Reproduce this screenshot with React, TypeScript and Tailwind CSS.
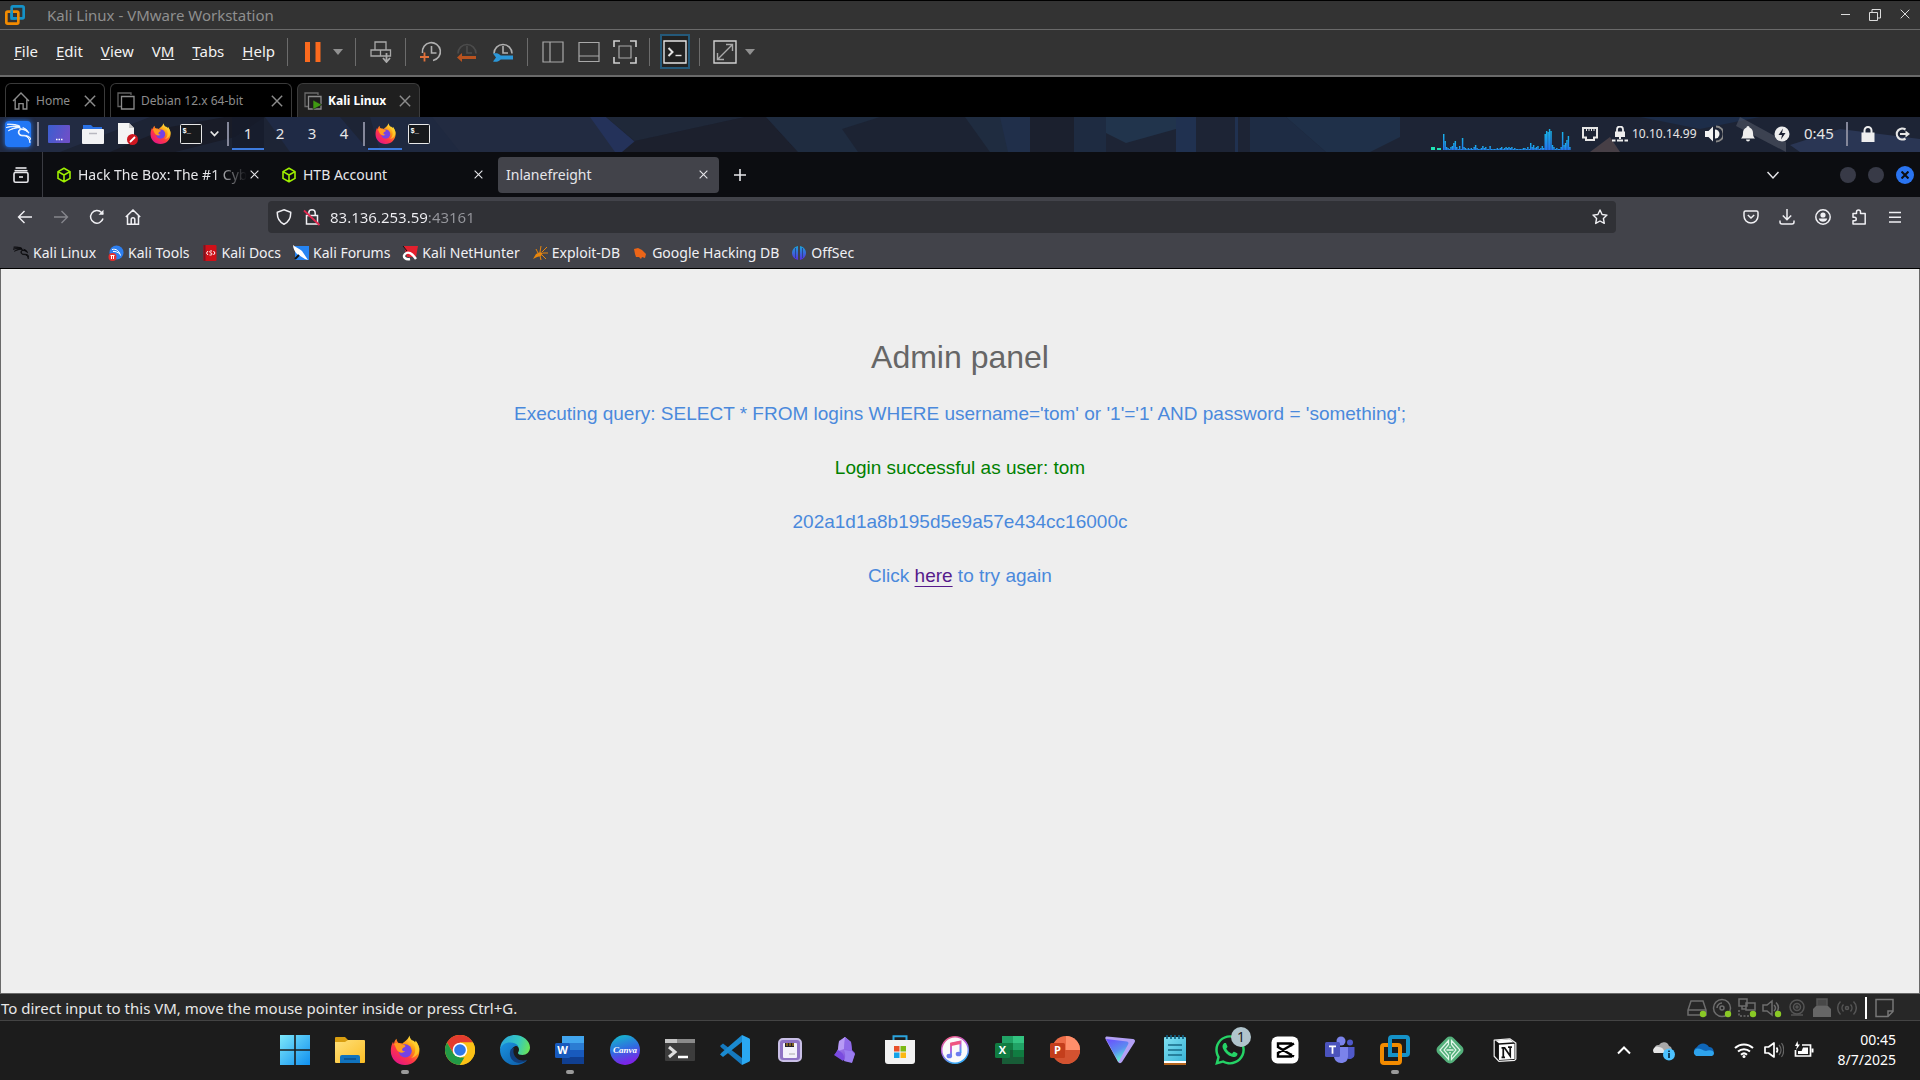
import React from 'react'
import { SiKalilinux } from 'react-icons/si'
import { FaWhatsapp } from 'react-icons/fa'

type IconProps = {
  size?: number
  box?: string
  className?: string
  children: React.ReactNode
}

// Line icon: strokes follow the text colour
const Line: React.FC<IconProps & { sw?: number }> = ({ size = 20, box, sw = 1.5, className = '', children }) => (
  <svg
    width={size}
    height={size}
    viewBox={box ?? `0 0 ${size} ${size}`}
    fill="none"
    stroke="currentColor"
    strokeWidth={sw}
    className={`shrink-0 ${className}`}
    aria-hidden="true"
  >
    {children}
  </svg>
)

const Art: React.FC<IconProps> = ({ size = 30, box, className = '', children }) => (
  <svg
    width={size}
    height={size}
    viewBox={box ?? `0 0 ${size} ${size}`}
    className={`shrink-0 ${className}`}
    aria-hidden="true"
  >
    {children}
  </svg>
)

const Defs = () => (
  <svg width="0" height="0" className="absolute" aria-hidden="true">
    <defs>
      <linearGradient id="win" x1="0" y1="0" x2="1" y2="1">
        <stop offset="0" stopColor="#7de8fb" />
        <stop offset="1" stopColor="#0f8fef" />
      </linearGradient>
      <linearGradient id="folder" x1="0" y1="0" x2="1" y2="1">
        <stop offset="0" stopColor="#ffe07a" />
        <stop offset="1" stopColor="#fbbd24" />
      </linearGradient>
      <linearGradient id="fox" x1="0.85" y1="0.05" x2="0.2" y2="0.95">
        <stop offset="0" stopColor="#fff44f" />
        <stop offset="0.35" stopColor="#ff980e" />
        <stop offset="0.65" stopColor="#ff3647" />
        <stop offset="1" stopColor="#e31587" />
      </linearGradient>
      <linearGradient id="edgeTop" x1="0" y1="0.3" x2="1" y2="0.5">
        <stop offset="0" stopColor="#2aa5dc" />
        <stop offset="0.6" stopColor="#35c8c0" />
        <stop offset="1" stopColor="#68e35a" />
      </linearGradient>
      <linearGradient id="edgeLow" x1="0" y1="0" x2="1" y2="1">
        <stop offset="0" stopColor="#1a93e0" />
        <stop offset="1" stopColor="#0c59a4" />
      </linearGradient>
      <linearGradient id="canva" x1="0" y1="0" x2="0.3" y2="1">
        <stop offset="0" stopColor="#12c3c9" />
        <stop offset="0.55" stopColor="#2f6de0" />
        <stop offset="1" stopColor="#7b25e8" />
      </linearGradient>
      <linearGradient id="tunes" x1="0" y1="0" x2="0.4" y2="1">
        <stop offset="0" stopColor="#fb5c74" />
        <stop offset="0.5" stopColor="#b660e0" />
        <stop offset="1" stopColor="#38a8f5" />
      </linearGradient>
      <linearGradient id="desk" x1="0" y1="0" x2="1" y2="0.3">
        <stop offset="0" stopColor="#3a5fd0" />
        <stop offset="1" stopColor="#6c50c8" />
      </linearGradient>
      <linearGradient id="vpn" x1="0" y1="0" x2="0.5" y2="1">
        <stop offset="0" stopColor="#6d4aff" />
        <stop offset="0.6" stopColor="#5b8df0" />
        <stop offset="1" stopColor="#5ff5d0" />
      </linearGradient>
      <linearGradient id="gem" x1="0" y1="0" x2="1" y2="1">
        <stop offset="0" stopColor="#b79bf5" />
        <stop offset="1" stopColor="#6a35d0" />
      </linearGradient>
      <linearGradient id="cpu" x1="0" y1="0" x2="0" y2="1">
        <stop offset="0" stopColor="#18b4ea" />
        <stop offset="1" stopColor="#2474f0" />
      </linearGradient>
      <linearGradient id="offsec" x1="0" y1="0" x2="0" y2="1">
        <stop offset="0" stopColor="#1aa5d8" />
        <stop offset="1" stopColor="#5a2ee0" />
      </linearGradient>
      <linearGradient id="note" x1="0" y1="0" x2="1" y2="1">
        <stop offset="0" stopColor="#7fe0f2" />
        <stop offset="1" stopColor="#39b3d6" />
      </linearGradient>
    </defs>
  </svg>
)

/* ---------- shared drawings ---------- */

const VmwareLogo = ({ size = 30 }: { size?: number }) => (
  <Art size={size} box="0 0 30 30">
    <rect x="10" y="2" width="18" height="18" rx="2" fill="none" stroke="#1592c8" strokeWidth="4" />
    <rect x="2" y="10" width="18" height="18" rx="2" fill="none" stroke="#f38b00" strokeWidth="4" />
    <path d="M10 8v12h6" fill="none" stroke="#1592c8" strokeWidth="4" />
  </Art>
)

const Firefox = ({ size = 30 }: { size?: number }) => (
  <Art size={size} box="0 0 30 30">
    <path
      d="M19.5 0.5c.2 2 1 3.600 2.500 5 1.200-.200 2.300.600 3 2 .800-.300.600-1.200.400-2 2.400 3 4 6.500 4 10.500C29.400 23.800 23 30 15 30S.800 24 .800 16c0-3.800 1-6.800 2.200-9.200.300 1 .500 1.700 1 2.200.200-2 1-4 2.600-5.200 0 1.800.600 3 2 4.200 1.200-.200 2.600 0 3.900.400C14 7 17.500 5.500 19.500.5z"
      fill="url(#fox)"
    />
    <circle cx="15.200" cy="15.800" r="6.600" fill="#7542e5" />
    <path d="M4 9c2-2 5.500-1 7.500.500 1.600 0 3.500.500 4 1.500-.500 1.500-3 1.500-3.500 3.500.300 1.500 1.500 2 3 1.800-2 2.600-7 1.500-8.500-2C5.500 12.500 5 10 4 9z" fill="#ff9a1f" />
    <path d="M19.500 .5c0 5 4.500 7 5.500 11.500 1 5-1 9-4 11 5-1 8.400-5 8.400-9.500C29 10 27 7.500 25.400 5.500c.200.800.400 1.700-.400 2-.7-1.400-1.800-2.200-3-2C20.500 4 19.700 2.500 19.500.5z" fill="#ffd02e" opacity="0.75" />
  </Art>
)

const Terminal = () => (
  <Art size={22} box="0 0 22 20" className="w-[22px]">
    <rect x="0.5" y="0.5" width="21" height="19" rx="1" fill="#17191c" stroke="#e8e8e8" />
    <text x="2.500" y="9" fontSize="7" fontWeight="bold" fill="#fff" fontFamily="Liberation Mono, monospace">
      $_
    </text>
  </Art>
)

const Cross = ({ size = 10, sw = 1.2 }: { size?: number; sw?: number }) => (
  <Line size={size} box="0 0 10 10" sw={sw}>
    <path d="M.7.7l8.600 8.600M9.300.7L.7 9.300" />
  </Line>
)

const Cube = () => (
  <Art size={16}>
    <path d="M8 1.200l6 3.400v6.800l-6 3.400-6-3.400V4.600zM2 4.600l6 3.400 6-3.400M8 8v6.800" fill="none" stroke="#9fef00" strokeWidth="1.600" strokeLinejoin="round" />
  </Art>
)

/* ---------- VMware window ---------- */

const TitleBar = () => (
  <header className="flex h-[30px] items-center border-t border-b border-t-black border-b-[#6a6a6a] bg-[#333333] pl-[5px]">
    <VmwareLogo size={20} />
    <h1 className="ml-[22px] flex-1 text-[15px] leading-6 text-[#8f8f8f]">Kali Linux - VMware Workstation</h1>
    <div className="flex text-[#dcdcdc]">
      <button aria-label="Minimize" className="flex w-[30px] justify-center">
        <Line size={11} sw={1}><path d="M1 5.5h9" /></Line>
      </button>
      <button aria-label="Restore" className="flex w-[30px] justify-center">
        <Line size={12} sw={1}><path d="M.5 3.500h8v8h-8zM3 3.500V.5h8.500V9H9" /></Line>
      </button>
      <button aria-label="Close" className="flex w-[30px] justify-center">
        <Cross size={10} sw={1} />
      </button>
    </div>
  </header>
)

const MENUS = [
  { pre: '', key: 'F', post: 'ile' },
  { pre: '', key: 'E', post: 'dit' },
  { pre: '', key: 'V', post: 'iew' },
  { pre: 'V', key: 'M', post: '' },
  { pre: '', key: 'T', post: 'abs' },
  { pre: '', key: 'H', post: 'elp' },
]

const Sep = () => (
  <div className="flex w-3.5 justify-center">
    <div className="h-7 w-px bg-[#6c6c6c]" />
  </div>
)

const Tool: React.FC<{ label: string; children: React.ReactNode }> = ({ label, children }) => (
  <button aria-label={label} className="flex h-9 w-9 items-center justify-center text-[#a9a9a9]">
    {children}
  </button>
)

const Caret = () => (
  <svg width="10" height="6" viewBox="0 0 10 6" className="shrink-0" aria-hidden="true">
    <path d="M0 0h10L5 6z" fill="#909090" />
  </svg>
)

const ClockFace = ({ dim = false }: { dim?: boolean }) => (
  <g stroke={dim ? '#595959' : '#b0b0b0'} strokeWidth="1.600">
    <path d="M2.500 12A9 9 0 1 1 13 19.500" />
    <path d="M11.500 5v7h5" />
  </g>
)

const HalfClock = ({ dim = false }: { dim?: boolean }) => (
  <g stroke={dim ? '#4c4c4c' : '#b0b0b0'} strokeWidth="1.600">
    <path d="M2 12.500A9 9 0 1 1 20 12.500" />
    <path d="M11 5v7h5" />
  </g>
)

const MenuBar = () => (
  <nav className="flex h-[47px] items-center border-b-2 border-[#6a6a6a] bg-[#333333] pb-0.5 pl-3.5">
    <div className="flex gap-[18px] text-[15px] text-[#f2f2f2]">
      {MENUS.map((m) => (
        <button key={m.key}>
          {m.pre}
          <span className="underline underline-offset-2">{m.key}</span>
          {m.post}
        </button>
      ))}
    </div>
    <div className="ml-1.5 flex items-center">
      <Sep />
      <Tool label="Suspend">
        <Art size={20}>
          <rect x="2" y="0" width="5" height="20" fill="#fb6a1e" />
          <rect x="12.500" y="0" width="5" height="20" fill="#fb6a1e" />
        </Art>
      </Tool>
      <button aria-label="Power options" className="mr-1 flex w-3.5 justify-center"><Caret /></button>
      <Sep />
      <Tool label="Send Ctrl+Alt+Del">
        <Line size={22} sw={1.3}>
          <path d="M5 1h11v8H5zM1 9h9.500v6H1zM10.500 9h10v6h-10z" />
          <path d="M16.500 12v8M13 17l3.500 4 3.500-4" strokeWidth="1.800" />
        </Line>
      </Tool>
      <Sep />
      <Tool label="Take snapshot">
        <Line size={22}><ClockFace /><path d="M0 16h9M4.500 11.500v9" stroke="#e0703a" strokeWidth="1.800" /></Line>
      </Tool>
      <Tool label="Revert snapshot">
        <Line size={22}><HalfClock dim /><path d="M3 16.500h17" stroke="#b8521f" strokeWidth="3" /><path d="M6 12v9l-5-4.500z" fill="#b8521f" stroke="none" /></Line>
      </Tool>
      <Tool label="Manage snapshots">
        <Line size={22}>
          <HalfClock />
          <path d="M6 16.500h15" stroke="#2b97d8" strokeWidth="4" />
          <path d="M1 12.500c5-1 8 1 8 4s-3 5-8 4l3-4z" fill="#2b97d8" stroke="none" />
        </Line>
      </Tool>
      <Sep />
      <Tool label="Show library"><Line size={22} sw={1.2}><path d="M1 1h20v20H1zM8 1v20" /></Line></Tool>
      <Tool label="Show thumbnail bar"><Line size={22} sw={1.2}><path d="M1 1.500h20v19H1zM1 15h20" /></Line></Tool>
      <Tool label="Full screen">
        <Line size={24} sw={1.6}>
          <path d="M1 7V1h6M17 1h6v6M23 17v6h-6M7 23H1v-6" stroke="#d0d0d0" />
          <path d="M6 6h12v12H6z" strokeWidth="1.200" />
        </Line>
      </Tool>
      <Sep />
      <button aria-label="Console view" className="mx-[3px] flex h-[35px] w-[30px] items-center justify-center border-2 border-[#24597a] bg-[#222] text-[#e4e4e4]">
        <Line size={24} sw={1.4}><path d="M1 1h22v22H1z" /><path d="M5.500 8l4 4-4 4" strokeWidth="2" /><path d="M12.500 15.500h6" /></Line>
      </button>
      <Sep />
      <Tool label="Stretch guest">
        <Line size={24} sw={1.4}><path d="M1 1h22v22H1z" stroke="#d0d0d0" /><path d="M5 19L19 5M13 4.500h6.500V11M4.500 13v6.500H11" /></Line>
      </Tool>
      <button aria-label="Stretch options" className="flex w-3.5 justify-center"><Caret /></button>
    </div>
  </nav>
)

const VM_TABS = [
  { name: 'Home', kind: 'home', width: 'w-[100px]', active: false },
  { name: 'Debian 12.x 64-bit', kind: 'vm', width: 'w-[182px]', active: false },
  { name: 'Kali Linux', kind: 'run', width: 'w-[123px]', active: true },
]

const TabIcon = ({ kind }: { kind: string }) => {
  if (kind === 'home') {
    return <Line size={18} box="0 0 17 17" sw={1.3}><path d="M1 8.500L8.500 1 16 8.500M3 7v9h3.500v-5h4v5H14V7" /></Line>
  }
  return (
    <Line size={18} sw={1.3}>
      <path d="M4 14.500H1V1h13v2" opacity="0.7" />
      <path d="M4.500 4.500h12.500v12.500H4.500z" />
      {kind === 'run' && <path d="M9 8v9.500l9-4.700z" fill="#3f9a12" stroke="#1f1f1f" strokeWidth="0.600" />}
    </Line>
  )
}

const VmTabs = () => (
  <div className="flex h-10 items-end gap-[5px] bg-black pl-[5px]">
    {VM_TABS.map((t) => (
      <div
        key={t.name}
        className={`flex h-[34px] items-center rounded-t-md border border-b-0 pr-2 pl-1.5 text-xs text-[#8c8c8c] ${t.width} ${
          t.active ? 'border-[#3c3c3c] bg-[#1f1f1f]' : 'border-[#3a3a3a] bg-black'
        }`}
      >
        <TabIcon kind={t.kind} />
        <button className={`ml-1.5 flex-1 whitespace-nowrap text-left ${t.active ? 'font-bold text-white' : ''}`}>{t.name}</button>
        <button aria-label={`Close ${t.name}`}><Cross size={12} /></button>
      </div>
    ))}
  </div>
)

/* ---------- Kali desktop panel ---------- */

const Wallpaper = () => (
  <svg className="absolute inset-0 h-full w-full" viewBox="0 0 1920 35" preserveAspectRatio="none" aria-hidden="true">
    <rect width="1920" height="35" fill="#1d2435" />
    <path d="M0 0h150L60 35H0z" fill="#222b42" />
    <path d="M110 35l60-25 55-10h40l-30 20-60 15z" fill="#191c28" />
    <path d="M265 0l25 35h80L340 0z" fill="#1f2a45" />
    <path d="M370 0h70l20 35h-80z" fill="#1f2940" />
    <path d="M432 0h160l32 35H460z" fill="#222b41" />
    <path d="M590 0h16l29 25-10 10h-10z" fill="#24325a" />
    <path d="M606 0h139L635 24z" fill="#1f2839" />
    <path d="M635 24L745 0h21l32 35H622z" fill="#1c202d" />
    <path d="M766 0h264v35H798z" fill="#1f2c40" />
    <path d="M842 12L880 0h85l25 35H858z" fill="#1c2333" />
    <path d="M1000 0h30v35h-22z" fill="#202f4a" />
    <path d="M1030 0h44v35h-44z" fill="#1b202e" />
    <path d="M1074 0h32v35h-32z" fill="#1e2b41" />
    <path d="M1106 0h70v12l-50 14-20-10z" fill="#21344c" />
    <path d="M1176 0h20v35h-20zM1235 0h3v35h-3z" fill="#203150" />
    <path d="M1250 0h36l40 35h-76z" fill="#1e2c44" />
    <path d="M1286 0h114v20l-30 15h-44z" fill="#1f3049" />
    <path d="M1640 0h120l-60 12z" fill="#1d2d49" />
    <path d="M1740 0l46 25v10l-50-26z" fill="#5b5f6e" opacity="0.5" />
    <path d="M1610 20l10 15h-30z" fill="#5a4b4e" opacity="0.7" />
    <path d="M1790 28l50-16 80 10v13h-120z" fill="#2a3654" />
  </svg>
)

const CPU_LOAD = [
  16, 9, 3, 2, 1, 3, 4, 7, 9, 3, 1, 4, 1, 12, 3, 2, 1, 2, 1, 2, 1, 3, 5, 2, 1, 1, 2, 4, 2, 3, 1, 1, 4, 1, 1, 1, 1, 2,
  1, 2, 3, 1, 2, 3, 2, 3, 2, 3, 1, 2, 1, 1, 1, 1, 1, 2, 2, 1, 3, 1, 7, 3, 5, 2, 3, 4, 1, 2, 4, 2, 16, 19, 18, 21, 19,
  5, 3, 1, 2, 1, 1, 3, 18, 5, 7, 10, 14, 3,
]

const CpuGraph = () => (
  <svg width="140" height="22" viewBox="0 0 140 22" className="self-end" aria-hidden="true">
    <rect x="0" y="19" width="4" height="3" fill="#1fe3b4" />
    <rect x="6" y="20" width="4" height="2" fill="#1fe3b4" />
    {CPU_LOAD.map((v, i) => (
      <rect key={i} x={12 + i * 1.45} y={22 - v} width="1.450" height={v} fill="url(#cpu)" />
    ))}
  </svg>
)

const PanelSep = () => <div className="h-6 w-0.5 bg-[#84879a]" />

const KaliPanel = () => (
  <div className="relative h-[35px] overflow-hidden bg-[#1e2638] text-[#e6e6e6]">
    <Wallpaper />
    <div className="relative flex h-full items-center pb-0.5">
      <button aria-label="Applications" className="ml-[5px] flex h-[26px] w-[26px] items-center justify-center rounded-sm bg-[#2277f5] text-white shadow-[0_0_5px_#2277f5]">
        <SiKalilinux size={25} strokeWidth={0.8} />
      </button>
      <div className="ml-1.5"><PanelSep /></div>
      <button aria-label="Show desktop" className="ml-[9px]">
        <Art size={22} box="0 0 22 18"><rect width="22" height="18" rx="1" fill="url(#desk)" /><path d="M8 14.500h1.500M10.500 14.500H12M13 14.500h1.500" stroke="#fff" strokeWidth="1.500" /></Art>
      </button>
      <button aria-label="Files" className="ml-3">
        <Art size={22}><path d="M1 2h8l2 2h9v5H1z" fill="#2b72e6" /><rect x="0" y="6" width="22" height="15" rx="1" fill="#f2f2f4" /><path d="M7 10.500h8" stroke="#b8b8c0" strokeWidth="1.500" /></Art>
      </button>
      <button aria-label="Text editor" className="ml-3">
        <Art size={22}>
          <path d="M2 0h11l5 5v16H2z" fill="#f4f4f4" /><path d="M13 0l5 5h-5z" fill="#c8c8c8" />
          <circle cx="16.500" cy="16.500" r="5.500" fill="#cf1720" /><path d="M14 19l5-5" stroke="#fff" strokeWidth="1.800" />
        </Art>
      </button>
      <button aria-label="Firefox" className="ml-3"><Firefox size={21} /></button>
      <button aria-label="Terminal" className="ml-[9px]"><Terminal /></button>
      <button aria-label="More launchers" className="ml-2"><Line size={9} sw={1.8}><path d="M.7 2.500l3.800 4 3.800-4" /></Line></button>
      <div className="ml-2"><PanelSep /></div>
      <div className="ml-[3px] flex h-full">
        {[1, 2, 3, 4].map((n) => (
          <button
            key={n}
            className={`h-full w-8 border-b-2 pt-0.5 text-[15px] ${n === 1 ? 'border-[#3d7bde] bg-[#161b2b]/70' : 'border-transparent'}`}
          >
            {n}
          </button>
        ))}
      </div>
      <div className="ml-[3px]"><PanelSep /></div>
      <button aria-label="Firefox window" className="ml-[3px] flex h-full w-[34px] items-center justify-center border-b-2 border-[#3d7bde] pt-0.5"><Firefox size={21} /></button>
      <button aria-label="Terminal window" className="ml-1.5"><Terminal /></button>

      <div className="flex-1" />
      <CpuGraph />
      <Line size={16} sw={2} className="ml-[11px]"><path d="M1 2h14v9.500h-3v2.500H4v-2.500H1z" /><path d="M4.500 2v3M7 2v3M9.500 2v3M12 2v3" strokeWidth="1" /></Line>
      <Art size={16} className="ml-3.5">
        <path d="M3 5.500h10V11H3z" fill="#eee" /><path d="M5 6V3.500a3 3 0 0 1 6 0V6" fill="none" stroke="#eee" strokeWidth="1.800" /><path d="M8 11v2M0 14.500h3.500M5 14.500h6M12.500 14.500H16" stroke="#eee" strokeWidth="2" />
      </Art>
      <span className="ml-1 w-16 whitespace-nowrap text-xs">10.10.14.99</span>
      <Art size={18} className="ml-[9px]">
        <path d="M0 6h3.500L8 1.500v15L3.500 12H0z" fill="#f2f2f2" /><path d="M10 4.500a4.500 4.500 0 0 1 0 9z" fill="#f2f2f2" /><path d="M11 1.500a7.500 7.500 0 0 1 0 15" fill="none" stroke="#888" strokeWidth="1.800" />
      </Art>
      <Art size={16} className="ml-[17px]">
        <path d="M8 0c1 0 1.500.8 1.500 1.500C12 2.500 13 4.500 13 7c0 3 .7 4 2 5.500H1C2.300 11 3 10 3 7c0-2.500 1-4.500 3.500-5.500C6.500.8 7 0 8 0zM6 13.500h4a2 2 0 0 1-4 0z" fill="#eee" />
      </Art>
      <Art size={16} className="ml-[18px]"><circle cx="8" cy="8" r="7.500" fill="#eee" /><path d="M9 2.500L4.500 9H8l-1 4.500L11.500 7H8z" fill="#1c2132" /></Art>
      <span className="ml-3.5 w-[30px] text-[15px]">0:45</span>
      <div className="ml-3"><PanelSep /></div>
      <Art size={16} className="ml-3"><path d="M1.500 6.500h13V16h-13z" fill="#eee" /><path d="M4.500 7V4.500a3.500 3.500 0 0 1 7 0V7" fill="none" stroke="#eee" strokeWidth="2" /></Art>
      <Line size={16} sw={2.2} className="mr-2.5 ml-[18px]"><path d="M11.500 3.500a5.500 5.500 0 1 0 0 9M6 8h7" /><path d="M11.500 4.500v7L16 8z" fill="currentColor" stroke="none" /></Line>
    </div>
  </div>
)

/* ---------- Firefox ---------- */

const BROWSER_TABS = [
  { title: 'Hack The Box: The #1 Cyb', icon: true, fade: true, active: false },
  { title: 'HTB Account', icon: true, fade: false, active: false },
  { title: 'Inlanefreight', icon: false, fade: false, active: true },
]

const BrowserTabs = () => (
  <div className="flex h-[45px] items-center bg-[#0c0d11] text-sm text-[#e6e6ea]">
    <button aria-label="Firefox View" className="flex w-[42px] justify-center">
      <Line size={16} sw={1.6}><path d="M2.500 1h11" /><path d="M1.500 3.700h13" /><rect x="1" y="5.500" width="14" height="9.700" rx="1.500" /><path d="M6 10h4" /></Line>
    </button>
    <div className="h-full w-px bg-[#3a3b42]" />
    <div className="ml-[5px] flex gap-1">
      {BROWSER_TABS.map((t) => (
        <div key={t.title} className={`flex h-9 w-[221px] items-center rounded px-2 ${t.active ? 'bg-[#42434a]' : ''}`}>
          {t.icon && <Cube />}
          <button
            className={`flex-1 text-left whitespace-nowrap ${t.icon ? 'ml-1.5' : ''} ${
              t.fade ? '[mask-image:linear-gradient(to_right,black_80%,transparent)]' : ''
            }`}
          >
            {t.title}
          </button>
          <button aria-label={`Close ${t.title}`} className="flex w-4 justify-center"><Cross size={9} /></button>
        </div>
      ))}
    </div>
    <button aria-label="New tab" className="ml-[15px]"><Line size={12} sw={1.6}><path d="M6 0v12M0 6h12" /></Line></button>
    <div className="flex-1" />
    <button aria-label="List all tabs"><Line size={12} sw={1.5}><path d="M.5 3l5.500 6 5.500-6" /></Line></button>
    <div className="mr-1.5 ml-[61px] flex items-center gap-3">
      <button aria-label="Minimize window" className="h-4 w-4 rounded-full bg-[#383a47]" />
      <button aria-label="Maximize window" className="h-4 w-4 rounded-full bg-[#383a47]" />
      <button aria-label="Close window" className="flex h-[18px] w-[18px] items-center justify-center rounded-full bg-[#2a74f0] text-[#0c0d11]">
        <Cross size={8} sw={2.6} />
      </button>
    </div>
  </div>
)

const NavButton: React.FC<{ label: string; dim?: boolean; children: React.ReactNode }> = ({ label, dim, children }) => (
  <button aria-label={label} className={`flex h-9 w-9 items-center justify-center ${dim ? 'text-[#85868c]' : 'text-[#f0f0f4]'}`}>
    {children}
  </button>
)

const NavBar = () => (
  <div className="flex h-10 items-center bg-[#42434a] pr-[7px] pl-[7px]">
    <NavButton label="Back"><Line size={16} sw={1.4}><path d="M15 8H1.500M7.500 2L1.500 8l6 6" /></Line></NavButton>
    <NavButton label="Forward" dim><Line size={16} sw={1.4}><path d="M1 8h13.500M8.500 2l6 6-6 6" /></Line></NavButton>
    <NavButton label="Reload"><Line size={16} sw={1.5}><path d="M14 9.500A6.300 6.300 0 1 1 12.500 3.500L14 5" /><path d="M9.500 5.700h5V.8z" fill="currentColor" stroke="none" /></Line></NavButton>
    <NavButton label="Home"><Line size={16} sw={1.5}><path d="M.8 8L8 1l7.200 7M2.500 6.800v8.400h11V6.800M6.200 15V10.500a1.800 1.800 0 0 1 3.600 0V15" /></Line></NavButton>
    <div className="mx-[117px] flex h-8 flex-1 items-center rounded bg-[#303136] px-2 text-[15px]">
      <Line size={16} sw={1.5} className="text-[#f0f0f4]"><path d="M8 .8l6.700 2.400c.2 5-1.200 9.500-6.700 12C2.500 12.700 1.100 8.200 1.300 3.200z" /></Line>
      <Line size={18} sw={1.5} className="ml-[11px] text-[#f0f0f4]">
        <path d="M3.500 7.500h11v8.500h-11zM5.800 7.500V5a3.200 3.200 0 0 1 6.400 0v2.500" />
        <path d="M1 2.500L16.500 17" stroke="#e22850" strokeWidth="1.800" />
      </Line>
      <label htmlFor="url" aria-label="Search or enter address" />
      {/* host part is bright, port part is dimmed */}
      <input
        id="url"
        defaultValue="83.136.253.59:43161"
        className="ml-[9px] min-w-0 flex-1 bg-[linear-gradient(to_right,#f0f0f4_98px,#95969c_98px)] bg-clip-text text-transparent caret-white outline-none"
      />
      <button aria-label="Bookmark this page" className="text-[#f0f0f4]">
        <Line size={16} sw={1.4}><path d="M8 1l2.100 4.500 4.900.600-3.600 3.400.9 4.900L8 12l-4.300 2.400.9-4.900L1 6.100l4.900-.6z" strokeLinejoin="round" /></Line>
      </button>
    </div>
    <NavButton label="Save to Pocket"><Line size={16}><path d="M2.500 2h11a1.500 1.500 0 0 1 1.500 1.500V7A7 7 0 0 1 1 7V3.500A1.500 1.500 0 0 1 2.500 2zM4.800 6l3.200 3 3.200-3" /></Line></NavButton>
    <NavButton label="Downloads"><Line size={16}><path d="M8 0v10.500M3.800 6.500L8 10.700l4.200-4.200M1 11.500v1.500a2 2 0 0 0 2 2h10a2 2 0 0 0 2-2v-1.500" /></Line></NavButton>
    <NavButton label="Account"><Line size={16}><circle cx="8" cy="8" r="7.200" /><circle cx="8" cy="6" r="2.600" fill="currentColor" stroke="none" /><path d="M3.800 9.500h8.400c-.5 2.200-2 3.300-4.200 3.300s-3.700-1.100-4.200-3.300z" fill="currentColor" stroke="none" /></Line></NavButton>
    <NavButton label="Extensions"><Line size={16}><path d="M2 4.500h3.500V3a2 2 0 0 1 4 0v1.500h4.700V15H2v-3.200h1.500a1.700 1.700 0 0 0 0-3.500H2z" strokeLinejoin="round" /></Line></NavButton>
    <NavButton label="Menu"><Line size={14} sw={1.4}><path d="M1 2.500h12M1 7.200h12M1 12h12" /></Line></NavButton>
  </div>
)

const BOOKMARKS = [
  { name: 'Kali Linux', icon: <SiKalilinux size={16} color="#0b0b0d" strokeWidth={1} /> },
  {
    name: 'Kali Tools',
    icon: (
      <Art size={16}>
        <circle cx="8.500" cy="7.500" r="7" fill="#2d7ff0" /><path d="M4 4.500c4-1 7 1 8.500 6M5 6.500c3-.5 4 1 7 2" stroke="#fff" fill="none" />
        <circle cx="4.500" cy="12" r="4" fill="#e52e2e" /><path d="M2.500 10.500h4M3.500 10.500V14M5.500 10.500V14" stroke="#fff" />
      </Art>
    ),
  },
  {
    name: 'Kali Docs',
    icon: (
      <Art size={16} box="0 0 13 16">
        <rect width="13" height="16" rx="1" fill="#cf1018" /><rect width="2" height="16" fill="#7c1420" /><path d="M4.500 6L3 8l1.500 2M10 6l1.500 2L10 10M8.500 6c-3-.5-3 1.500-1 2s1.500 2.300-1.500 2" stroke="#fff" fill="none" />
      </Art>
    ),
  },
  {
    name: 'Kali Forums',
    icon: <Art size={16}><path d="M2 1h14v14H2z" fill="#2584f3" /><path d="M0 0c2 2 7 4 9 6l6 9-3-1-8-5C2 7 0 3 0 0z" fill="#fff" /><path d="M2 14l4-4" stroke="#111" strokeWidth="2" /></Art>,
  },
  {
    name: 'Kali NetHunter',
    icon: <Art size={16}><path d="M2 1h14l-2 11H5z" fill="#e3202e" /><path d="M14 14C10 8 6 6 3 9c-3 3 1 6 5 5" stroke="#fff" strokeWidth="2.400" fill="none" /><path d="M1 1l4 5" stroke="#111" /></Art>,
  },
  {
    name: 'Exploit-DB',
    icon: (
      <Art size={16}>
        <path d="M1 14l3-5 4-2 3 1-2 3-4 1z" fill="#e8860c" />
        <path d="M6 8L4 4M8 7l1-6M10 7l5-5M11 8h5M10 10l4 4M8 11l1 4" stroke="#e8860c" fill="none" />
      </Art>
    ),
  },
  { name: 'Google Hacking DB', icon: <Art size={16}><path d="M2 4l4-1 4 2 4 4-1 4-3-1-1 2-2-2-3 0-1-3z" fill="#ec6517" /></Art> },
  {
    name: 'OffSec',
    icon: <Art size={16}><path d="M7 1v14C3 14 1 11 1 8s2-6 6-7zM9 1v14c4-1 6-4 6-7s-2-6-6-7z" fill="url(#offsec)" /><path d="M4.500 3v10M11.500 3v10" stroke="#2a4790" /></Art>,
  },
]

const Bookmarks = () => (
  <div className="flex h-8 items-center gap-3 border-b border-black bg-[#42434a] pl-[13px] text-sm text-[#f0f0f4]">
    {BOOKMARKS.map((b) => (
      <a key={b.name} href="#" className="flex items-center gap-1 whitespace-nowrap">
        {b.icon}
        {b.name}
      </a>
    ))}
  </div>
)

const PageContent = () => (
  <main className="flex-1 border-x border-[#6a6a6a] bg-[#eeeeee] pt-[68px] text-center font-['Liberation_Sans',sans-serif] text-[19px] leading-7 text-[#4a89dc]">
    <h2 className="text-[32px] leading-10 text-[#666666]">Admin panel</h2>
    <div className="mt-[23px] flex flex-col gap-[26px]">
      <p>Executing query: SELECT * FROM logins WHERE username='tom' or '1'='1' AND password = 'something';</p>
      <p className="text-[#008000]">Login successful as user: tom</p>
      <p>202a1d1a8b195d5e9a57e434cc16000c</p>
      <p>
        Click <a href="#" className="text-[#551a8b] underline decoration-1 underline-offset-4">here</a> to try again
      </p>
    </div>
  </main>
)

/* ---------- VMware status bar ---------- */

const Dot = () => <circle cx="16" cy="16" r="3.200" fill="#8ac926" stroke="none" />

const StatusBar = () => (
  <footer className="flex h-7 items-center border-t border-b border-t-[#6a6a6a] border-b-[#444] bg-[#272727] pt-0.5 pl-px text-[#e8e8e8]">
    <p className="flex-1 text-[15px]">To direct input to this VM, move the mouse pointer inside or press Ctrl+G.</p>
    <div className="flex gap-[5px] text-[#6d6d6d]">
      <Line size={20}><path d="M4 3h12l3 9v5H1v-5zM1 12h18" /><Dot /></Line>
      <Line size={20}><circle cx="10" cy="10" r="8.500" /><circle cx="10" cy="10" r="2" /><path d="M5 10a5 5 0 0 1 5-5" /><Dot /></Line>
      <Line size={20}><path d="M2 1h8v7H2zM9 5h9v7H9zM5 8v3h4" /><path d="M2 12v6h10" strokeDasharray="2 1.500" /><Dot /></Line>
      <Line size={20}><path d="M1 7h4l5-4v14l-5-4H1zM12 7c2 2 2 4 0 6M14 4.500c3 3 3 6 1 9" /><Dot /></Line>
      <Line size={20} className="text-[#555]"><circle cx="10" cy="9" r="7" /><circle cx="10" cy="9" r="3.500" /><circle cx="10" cy="9" r="1" /><path d="M4 17h12" /></Line>
      <Line size={20}><path d="M5 1h10v7H5z" fill="#484848" stroke="#555" /><path d="M1 11l3-3h12l3 3v8H1z" fill="#666" stroke="none" /></Line>
      <Line size={20} className="text-[#555]"><circle cx="10" cy="10" r="1.500" /><path d="M6.500 6.500a5 5 0 0 0 0 7M13.500 6.500a5 5 0 0 1 0 7M3.500 3.500a9 9 0 0 0 0 13M16.500 3.500a9 9 0 0 1 0 13" /></Line>
    </div>
    <div className="ml-2 h-[22px] w-0.5 bg-white" />
    <Line size={20} className="mr-[25px] ml-2 text-[#777]"><path d="M1 1.500h17v12l-5 5H1zM18 13h-5v5" /></Line>
  </footer>
)

/* ---------- Windows taskbar ---------- */

const OfficeBadge = ({ letter, fill }: { letter: string; fill: string }) => (
  <>
    <rect x="0" y="8" width="15" height="15" rx="1.500" fill={fill} />
    <text x="7.500" y="19" fontSize="11" fontWeight="bold" fill="#fff" textAnchor="middle" fontFamily="Open Sans, sans-serif">
      {letter}
    </text>
  </>
)

const APPS: { name: string; icon: React.ReactNode; running?: boolean; badge?: string }[] = [
  {
    name: 'Start',
    icon: <Art><g fill="url(#win)"><path d="M0 0h14.200v14.200H0zM15.800 0H30v14.200H15.800zM0 15.800h14.200V30H0zM15.800 15.800H30V30H15.800z" /></g></Art>,
  },
  {
    name: 'File Explorer',
    icon: (
      <Art>
        <path d="M0 3a1 1 0 0 1 1-1h9l3 3v5H0z" fill="#d99e10" /><path d="M0 7h10l3-2h16a1 1 0 0 1 1 1v21a1 1 0 0 1-1 1H1a1 1 0 0 1-1-1z" fill="url(#folder)" />
        <path d="M5 28v-6a2 2 0 0 1 2-2h16a2 2 0 0 1 2 2v6z" fill="#1173be" /><path d="M9 24h12" stroke="#0a4d8a" strokeWidth="1.500" />
      </Art>
    ),
  },
  { name: 'Firefox', icon: <Firefox />, running: true },
  {
    name: 'Chrome',
    icon: (
      <Art>
        <circle cx="15" cy="15" r="15" fill="#fbc116" />
        <path d="M2 7.500A15 15 0 0 1 28 7.500H15l-6.500 11z" fill="#e33b2e" />
        <path d="M2 7.500l6.500 11.200L15 22.500h6.500L14.500 30A15 15 0 0 1 2 7.500z" fill="#229a46" />
        <path d="M21.500 18.700L15 30A15 15 0 0 0 28 7.500H15z" fill="#fbc116" />
        <circle cx="15" cy="15" r="7.300" fill="#fff" /><circle cx="15" cy="15" r="5.800" fill="#2f78e8" />
      </Art>
    ),
  },
  {
    name: 'Edge',
    icon: (
      <Art>
        <path d="M0 15C0 6 7 0 15 0s15 6 15 12.500c0 4.500-3.500 7.500-7.500 7.500-3 0-4.500-1-4.500-2s1-1.500 1-3.500c0-3-3-5.500-7-5.500C6 9 1 12 0 15z" fill="url(#edgeTop)" />
        <path d="M0 15C1 10 5 7.500 10 7.500c4 0 7 1.500 8.500 4-2-1-4-.5-5.500 1-3 3-2 9 2 12.500 4 3.500 9 2 12 0-2.500 3.500-7 5-12 5C6 30 0 23 0 15z" fill="url(#edgeLow)" />
        <path d="M11 14c-2 4-1.500 9 3 12.500 4 2.500 9 1.500 13.500-2-3 1.500-8 1.500-11-1.500-2.500-2.500-4-6-2.500-10z" fill="#123f7d" />
      </Art>
    ),
  },
  {
    name: 'Word',
    running: true,
    icon: (
      <Art>
        <rect x="7" y="1" width="22" height="7" fill="#41a5ee" /><rect x="7" y="8" width="22" height="7" fill="#2b7cd3" /><rect x="7" y="15" width="22" height="7" fill="#185abd" /><rect x="7" y="22" width="22" height="7" fill="#103f91" />
        <OfficeBadge letter="W" fill="#185abd" />
      </Art>
    ),
  },
  {
    name: 'Canva',
    icon: (
      <Art>
        <circle cx="15" cy="15" r="15" fill="url(#canva)" />
        <text x="15" y="18" fontSize="9" fontStyle="italic" fontWeight="bold" fill="#fff" textAnchor="middle" fontFamily="Liberation Serif, serif">Canva</text>
      </Art>
    ),
  },
  {
    name: 'Command Prompt',
    icon: <Art><rect x="0" y="4" width="30" height="22" rx="1" fill="#3c3c3c" /><path d="M0 4h30v4H0z" fill="#8a8a8a" /><path d="M0 4h12v4H0z" fill="#c4c4c4" /><path d="M4 12l6 5-6 5" stroke="#ddd" strokeWidth="3" fill="none" /><path d="M13 22h10" stroke="#fff" strokeWidth="2.500" /></Art>,
  },
  {
    name: 'Visual Studio Code',
    icon: (
      <Art>
        <path d="M0 11l3-2.500L22 23v7L1.500 12.800z" fill="#1579bf" /><path d="M0 19.500l3 2.500L22 7V0L1.500 17.700z" fill="#1a8ad0" />
        <path d="M22 0l7 3.200a1.500 1.500 0 0 1 1 1.300v21a1.500 1.500 0 0 1-1 1.300L22 30z" fill="#2aa8f2" />
      </Art>
    ),
  },
  {
    name: 'Clipboard',
    icon: <Art><rect x="4" y="4" width="22" height="22" rx="4" fill="#8f74c4" stroke="#c9bfe6" strokeWidth="2" /><rect x="8" y="8" width="14" height="15" rx="1" fill="#f3f1fa" /><rect x="10" y="8" width="9" height="4" fill="#26232e" /><path d="M12 8v3M15 8v3M18 8v3" stroke="#d9a31a" /><path d="M14 19h6" stroke="#aaa" /></Art>,
  },
  {
    name: 'Obsidian',
    icon: <Art><path d="M15 2l6 5 1 8 3 3-3 9-7-1-10-6 3-6 1-8z" fill="url(#gem)" /><path d="M15 2l-6 5-1 9 6-2z" fill="#b79bf5" /><path d="M15 2l6 5 1 9-8-2z" fill="#8f6ae8" /><path d="M8 15l-4 5 9 6c2-4 1-8-5-11z" fill="#7a4be0" /><path d="M14 15l8 1 3 3-3 9-8-2c2-4 1-8 0-11z" fill="#9a7cf0" /></Art>,
  },
  {
    name: 'Microsoft Store',
    icon: (
      <Art>
        <path d="M8.500 6V1.200h13V6" stroke="#2ba3dc" strokeWidth="2" fill="none" /><path d="M0 5h30v21a3 3 0 0 1-3 3H3a3 3 0 0 1-3-3z" fill="#f2f2f2" />
        <path d="M9 11h5.500v5.500H9z" fill="#e8502a" /><path d="M15.500 11H21v5.500h-5.500z" fill="#7cb914" /><path d="M9 17.500h5.500V23H9z" fill="#14a2e8" /><path d="M15.500 17.500H21V23h-5.500z" fill="#fbb811" />
      </Art>
    ),
  },
  {
    name: 'iTunes',
    icon: <Art><circle cx="15" cy="15" r="13.300" fill="#fafafa" stroke="url(#tunes)" strokeWidth="1.500" /><path d="M11 21V8.500l9.500-2V18" stroke="url(#tunes)" strokeWidth="2" fill="none" /><path d="M11 9.500l9.500-2" stroke="#f0557f" strokeWidth="3" /><ellipse cx="9.300" cy="21" rx="2.800" ry="2.300" fill="#6c7cf0" /><ellipse cx="18.500" cy="19" rx="2.800" ry="2.300" fill="#6c7cf0" /></Art>,
  },
  {
    name: 'Excel',
    icon: (
      <Art>
        <rect x="7" y="1" width="22" height="28" fill="#21a366" /><path d="M18 1h11v7H18z" fill="#33c481" /><path d="M7 8h11v7H7z" fill="#107c41" /><path d="M7 15h22v14H7z" fill="#185c37" /><path d="M18 15h11v7H18z" fill="#107c41" />
        <OfficeBadge letter="X" fill="#107c41" />
      </Art>
    ),
  },
  {
    name: 'PowerPoint',
    icon: (
      <Art>
        <circle cx="16" cy="15" r="14" fill="#ed6c47" /><path d="M16 1a14 14 0 0 1 14 14H16z" fill="#ff8f6b" /><path d="M2 15h28a14 14 0 0 1-28 0z" fill="#d35230" />
        <OfficeBadge letter="P" fill="#c43e1c" />
      </Art>
    ),
  },
  {
    name: 'Proton VPN',
    icon: <Art><path d="M2 1.500l26 2.500c2 .5 2.500 2 1.500 3.500L17 27c-1 1.500-3 1.500-4 0L.5 4C0 2.500.5 1.500 2 1.500z" fill="#b3a0f5" /><path d="M1 4l21 2.500c1.500.5 2 1.500 1 3L13.500 27z" fill="url(#vpn)" /></Art>,
  },
  {
    name: 'Notepad',
    icon: <Art><rect x="4" y="2" width="22" height="25" rx="1" fill="url(#note)" /><rect x="4" y="26" width="22" height="2" fill="#fff" /><rect x="4" y="28" width="22" height="2" fill="#b5651d" /><path d="M8 10h14M8 15h14M8 20h14" stroke="#176a86" strokeWidth="1.700" /><path d="M7 0v4M11 0v4M15 0v4M19 0v4M23 0v4" stroke="#126080" strokeWidth="1.700" /></Art>,
  },
  { name: 'WhatsApp', icon: <FaWhatsapp size={34} color="#25d366" />, badge: '1' },
  {
    name: 'CapCut',
    icon: <Art><rect x="1.500" y="1.500" width="27" height="27" rx="6" fill="#fff" /><path d="M24 8.500L8 18v3.500h13v-3M24 21.500L8 12V8.500h13v3" stroke="#000" strokeWidth="2.400" fill="none" /></Art>,
  },
  {
    name: 'Teams',
    icon: (
      <Art>
        <circle cx="16" cy="6" r="4.500" fill="#7b83eb" /><circle cx="25" cy="7.500" r="3" fill="#5059c9" /><path d="M20 12h9.500v8a5 5 0 0 1-8 3z" fill="#5059c9" /><path d="M9 12h14v9c0 5-3 7-7 7s-7-3-7-7z" fill="#7b83eb" />
        <rect x="0" y="7" width="15" height="15" rx="1.500" fill="#4b53bc" /><path d="M4 11.300h7M7.500 11.300v7.500" stroke="#fff" strokeWidth="1.800" />
      </Art>
    ),
  },
  { name: 'VMware Workstation', icon: <VmwareLogo />, running: true },
  {
    name: 'Cryptomator',
    icon: (
      <Art>
        <rect x="4" y="4" width="22" height="22" rx="5" fill="#54b07b" transform="rotate(45 15 15)" />
        <path d="M13.500 5.500L5 15l8.500 9.500v-4L9 15l4.500-5.500zM16.500 5.500L25 15l-8.500 9.500v-4L21 15l-4.500-5.500z" fill="none" stroke="#dff5e8" strokeWidth="1.200" />
        <path d="M11.500 15h7M15 11.500v1.500M15 17v1.500" stroke="#dff5e8" strokeWidth="1.500" />
      </Art>
    ),
  },
  {
    name: 'Notion',
    icon: (
      <Art size={26} box="0 0 30 30">
        <path d="M2.500 3.500l18-1.500 7 5v18.500l-1.500 1.500-18 1.200-5.500-6z" fill="#111" stroke="#eee" strokeWidth="1.400" strokeLinejoin="round" />
        <path d="M4 4l16-1.300 5 3.500-17 1.100z" fill="#fff" />
        <path d="M8 9l18-1.200v17.700L8 26.600z" fill="#fff" />
        <path d="M11 12.500h3.500l6.500 9.500V12M13 13v10.500M18.500 11.800h4.500M11 23.500h4" fill="none" stroke="#111" strokeWidth="2" />
      </Art>
    ),
  },
]

const Taskbar = () => (
  <div className="flex h-[59px] items-center bg-[#1c1c1c] pb-0.5 pl-[267px] text-white">
    {APPS.map((a) => (
      <button key={a.name} aria-label={a.name} className="relative flex h-full w-[55px] shrink-0 items-center justify-center">
        {a.icon}
        {a.badge && (
          <span className="absolute top-1.5 right-1.5 flex h-5 w-5 items-center justify-center rounded-full bg-[#b0c4cc] text-sm text-[#1c1c1c]">
            {a.badge}
          </span>
        )}
        {a.running && <span className="absolute bottom-1 h-1 w-2 rounded-full bg-[#9a9a9a]" />}
      </button>
    ))}
    <div className="flex-1" />
    <button aria-label="Show hidden icons"><Line size={14} sw={2}><path d="M1 10.500l6-6 6 6" /></Line></button>
    <Art size={22} className="ml-[22px]">
      <path d="M5 14a4 4 0 0 1 1-8 5.500 5.500 0 0 1 10 1 3.600 3.600 0 0 1 0 7z" fill="#a8a8a8" /><path d="M1 14a4 4 0 0 1 5-6c3 0 5 2 6 6z" fill="#e4e4e4" />
      <circle cx="16" cy="15.500" r="6" fill="#4cc2ff" /><path d="M16 14v5M16 11.500V13" stroke="#0b3550" strokeWidth="1.800" />
    </Art>
    <Art size={22} className="ml-[18px]">
      <path d="M3 16a4.500 4.500 0 0 1 1-8 7 7 0 0 1 12 0 4.500 4.500 0 0 1 3 8z" fill="#0f66b8" /><path d="M3 17a4 4 0 0 1 1-7.500c4 0 6 2 9 2.500 3-1.500 8-1 8 2.200a3 3 0 0 1-2 2.800z" fill="#2ea3ec" />
    </Art>
    <Line size={20} sw={2} className="ml-[19px]"><path d="M1 8a13 13 0 0 1 18 0M4 11.500a9 9 0 0 1 12 0M7 14.700a4.500 4.500 0 0 1 6 0" /><circle cx="10" cy="16.500" r="1.500" fill="currentColor" stroke="none" /></Line>
    <Line size={20} sw={1.7} className="ml-2.5"><path d="M1 7h3.500L10 3v14l-5.500-4H1z" strokeLinejoin="round" /><path d="M12.500 7.500c1.200 1.500 1.200 3.500 0 5" /><path d="M15 5c2.500 3 2.500 7 0 10M17.500 3c3 4 3 10 0 14" stroke="#666" strokeWidth="1.200" /></Line>
    <Line size={20} sw={1.7} className="ml-2.5"><path d="M8 5h8.500v11H1.500v-6" /><path d="M4 11h10v3H4zM9 7.500h5v5H7z" fill="currentColor" stroke="none" /><path d="M18.500 8.500v4" strokeWidth="2" /><path d="M3.500 1L1 6h2L2 10l4-5.500H4z" fill="currentColor" stroke="none" /></Line>
    <div className="mr-6 ml-4 w-[66px] text-right text-sm leading-5">
      <div>00:45</div>
      <div>8/7/2025</div>
    </div>
  </div>
)

export default function App() {
  return (
    <div className="flex min-h-screen flex-col bg-black font-['Noto_Sans',sans-serif]">
      <Defs />
      <TitleBar />
      <MenuBar />
      <VmTabs />
      <KaliPanel />
      <BrowserTabs />
      <NavBar />
      <Bookmarks />
      <PageContent />
      <StatusBar />
      <Taskbar />
    </div>
  )
}
